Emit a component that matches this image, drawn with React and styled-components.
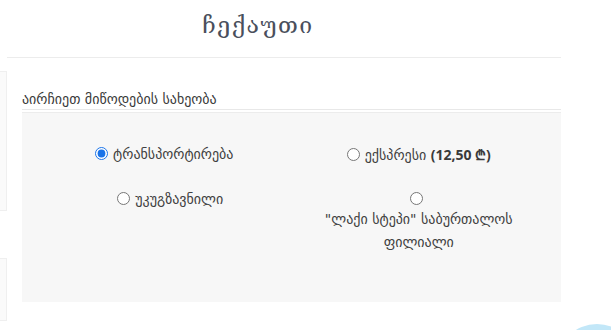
import React from "react";
import styled, { createGlobalStyle } from "styled-components";

const Global = createGlobalStyle`
  html, body { margin: 0; padding: 0; background: #fff; }
  body {
    width: 611px;
    height: 330px;
    overflow: hidden;
    font-family: "DejaVu Sans", "Noto Sans", sans-serif;
    color: #444;
  }
`;

const Page = styled.div`
  display: flex;
  width: 611px;
  height: 330px;
  position: relative;
  overflow: hidden;
`;

const Sidebar = styled.aside`
  width: 7px;
  flex: none;
  display: flex;
  flex-direction: column;
  padding-top: 71px;
  gap: 47px;
`;

const SideCard = styled.div`
  height: ${(p) => p.$h}px;
  background: #fafafa;
  border: 1px solid #efefef;
  border-left: none;
`;

const Main = styled.main`
  width: 554px;
  flex: none;
  display: flex;
  flex-direction: column;
`;

const Header = styled.header`
  height: 58px;
  border-bottom: 1px solid #ececec;
  display: flex;
  align-items: center;
  justify-content: center;
  padding-right: 52px;
  padding-bottom: 8px;
  box-sizing: border-box;
`;

const Title = styled.h1`
  margin: 0;
  font-family: "DejaVu Serif", "DejaVu Sans", serif;
  font-weight: normal;
  font-size: 23px;
  letter-spacing: 1.5px;
  color: #4a4f5c;
`;

const Content = styled.section`
  padding-left: 15px;
  padding-top: 31px;
`;

const SectionLabel = styled.div`
  font-size: 14px;
  line-height: 20px;
  color: #3a3a3a;
`;

const OptionsBox = styled.div`
  background: #f7f7f7;
  border-top: 1px solid #e8e8e8;
  box-shadow: inset 0 2px 0 #fff, inset 0 3px 0 #ececec;
  height: 193px;
  box-sizing: border-box;
  padding: 33px 15px 0;
  display: grid;
  grid-template-columns: 1fr 1fr;
  align-content: start;
  row-gap: 21px;
`;

const Option = styled.div`
  text-align: center;
  font-size: 14px;
  line-height: 23px;
  color: #404040;
  padding-left: ${(p) => p.$shift || 0}px;
`;

const Radio = styled.input.attrs({ type: "radio" })`
  width: 13px;
  height: 13px;
  margin: 0 5px 0 0;
  vertical-align: -1px;
  accent-color: #1a73e8;
`;

const OptionText = styled.label`
  display: inline-block;
  max-width: 100%;
  margin-top: ${(p) => (p.$wrapped ? -3 : 0)}px;
`;

const Price = styled.b`
  font-family: "Open Sans", "DejaVu Sans", sans-serif;
  font-weight: 700;
  font-size: 14px;
  color: #3a3a3a;
`;

const ChatBubble = styled.div`
  position: absolute;
  left: 557px;
  top: 324px;
  width: 80px;
  height: 80px;
  border-radius: 50%;
  background: #c2e7f8;
`;

export default function App() {
  return (
    <>
      <Global />
      <Page>
        <Sidebar>
          <SideCard $h={138} />
          <SideCard $h={61} />
        </Sidebar>
        <Main>
          <Header>
            <Title>ჩექაუთი</Title>
          </Header>
          <Content>
            <SectionLabel>აირჩიეთ მიწოდების სახეობა</SectionLabel>
            <OptionsBox>
              <Option>
                <Radio name="delivery" id="d1" defaultChecked />
                <OptionText htmlFor="d1">ტრანსპორტირება</OptionText>
              </Option>
              <Option>
                <Radio name="delivery" id="d2" />
                <OptionText htmlFor="d2">
                  ექსპრესი <Price>(12,50 ₾)</Price>
                </OptionText>
              </Option>
              <Option $shift={12}>
                <Radio name="delivery" id="d3" />
                <OptionText htmlFor="d3">უკუგზავნილი</OptionText>
              </Option>
              <Option>
                <Radio name="delivery" id="d4" />
                <OptionText htmlFor="d4" $wrapped>
                  "ლაქი სტეპი" საბურთალოს ფილიალი
                </OptionText>
              </Option>
            </OptionsBox>
          </Content>
        </Main>
        <ChatBubble />
      </Page>
    </>
  );
}
